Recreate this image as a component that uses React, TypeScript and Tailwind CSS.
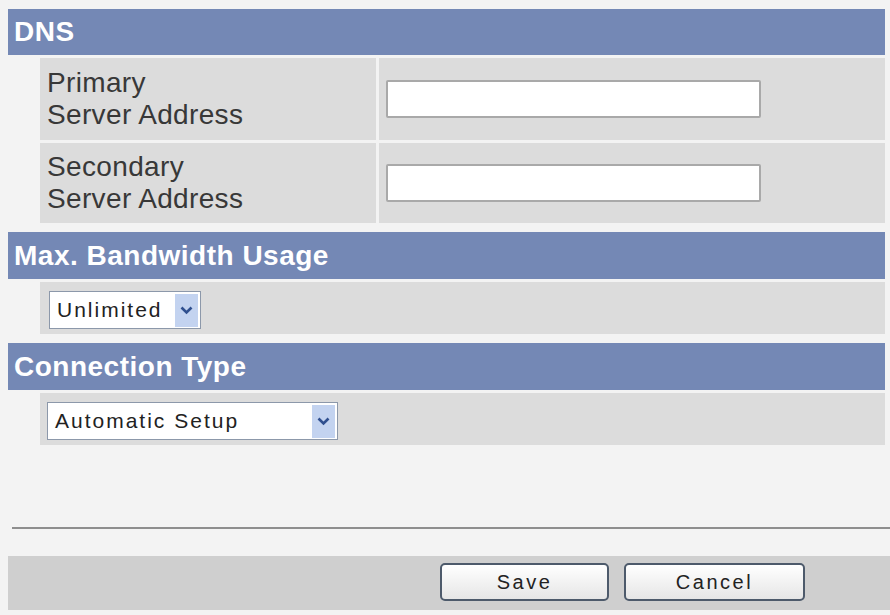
import React from 'react';

const font = { fontFamily: '"Liberation Sans", Arial, sans-serif' };

const SectionHeader: React.FC<{ title: string; className?: string }> = ({ title, className = 'h-[47px]' }) => (
  <div className={`${className} bg-[#7488b5] flex items-center pl-[6px]`}>
    <h2 className="text-[28px] font-bold text-white tracking-[0.5px] leading-none">{title}</h2>
  </div>
);

const ServerRow: React.FC<{ first: string; height: string }> = ({ first, height }) => (
  <div className={`flex ${height}`}>
    <div className="w-[32px]" />
    <div className="w-[336px] bg-[#dcdcdc] flex flex-col justify-center pl-[7px] text-[28px] leading-[32px] tracking-[0.35px] text-[#383838]">
      <span>{first}</span>
      <span>Server Address</span>
    </div>
    <div className="w-[3px]" />
    <div className="flex-1 bg-[#dcdcdc] flex items-center pl-[7px]">
      <input
        type="text"
        className="w-[375px] h-[38px] bg-white border-2 border-[#a9a9a9] rounded-[2px] outline-none"
      />
    </div>
  </div>
);

const FakeSelect: React.FC<{ value: string; width: string }> = ({ value, width }) => (
  <div className={`${width} h-[38px] bg-white border border-[#8c98aa] flex items-center justify-between pl-[7px] pr-[2px]`}>
    <span className="text-[21px] tracking-[2px] text-[#222]">{value}</span>
    <span className="w-[23px] h-[33px] bg-[#c3d3f0] flex items-center justify-center">
      <svg width="13" height="9" viewBox="0 0 13 9">
        <path d="M1.5 1.5 L6.5 6.5 L11.5 1.5" fill="none" stroke="#2f4f8f" strokeWidth="2.6" />
      </svg>
    </span>
  </div>
);

const Button: React.FC<{ label: string; width: string }> = ({ label, width }) => (
  <button
    className={`${width} h-[38px] rounded-[5px] border-2 border-[#4d5a6b] bg-gradient-to-b from-white to-[#e6e6e6] text-[20px] tracking-[2.5px] text-[#222]`}
  >
    {label}
  </button>
);

export default function App() {
  return (
    <div style={font} className="w-[890px] h-[615px] bg-[#f3f3f3] pt-[9px] pl-[8px] overflow-hidden">
      <div className="w-[877px]">
        {/* DNS */}
        <SectionHeader title="DNS" className="h-[46px]" />
        <div className="h-[3px]" />
        <ServerRow first="Primary" height="h-[82px]" />
        <div className="h-[3px]" />
        <ServerRow first="Secondary" height="h-[80px]" />

        {/* bandwidth */}
        <div className="h-[9px]" />
        <SectionHeader title="Max. Bandwidth Usage" />
        <div className="h-[3px]" />
        <div className="flex h-[52px]">
          <div className="w-[32px]" />
          <div className="flex-1 bg-[#dcdcdc] pl-[9px] pt-[9px]">
            <FakeSelect value="Unlimited" width="w-[152px]" />
          </div>
        </div>

        {/* connection */}
        <div className="h-[9px]" />
        <SectionHeader title="Connection Type" />
        <div className="h-[3px]" />
        <div className="flex h-[52px]">
          <div className="w-[32px]" />
          <div className="flex-1 bg-[#dcdcdc] pl-[7px] pt-[9px]">
            <FakeSelect value="Automatic Setup" width="w-[291px]" />
          </div>
        </div>
      </div>

      <div className="h-[82px]" />
      <div className="h-[2px] bg-[#8e8e8e] ml-[4px]" />
      <div className="h-[27px]" />

      {/* footer buttons */}
      <div className="h-[54px] bg-[#cfcfcf] flex items-start pt-[7px] pl-[432px] gap-[15px]">
        <Button label="Save" width="w-[169px]" />
        <Button label="Cancel" width="w-[181px]" />
      </div>
    </div>
  );
}
